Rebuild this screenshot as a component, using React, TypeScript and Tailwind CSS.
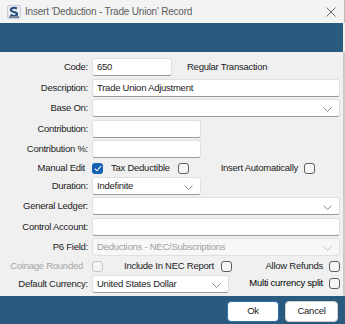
import React from "react"

const font = { fontFamily: '"Liberation Sans", Arial, sans-serif' }

function Chevron({ light }: { light?: boolean }) {
  return (
    <svg width="9" height="5" viewBox="0 0 9 5" className="absolute right-[7px] top-[7px]">
      <path d="M0.5 0.5 L4.5 4.5 L8.5 0.5" fill="none" stroke={light ? "#c4c4c4" : "#8a8a8a"} strokeWidth="1" />
    </svg>
  )
}

function Field({
  width,
  value,
  select,
  disabled,
}: {
  width?: string
  value?: string
  select?: boolean
  disabled?: boolean
}) {
  return (
    <div
      className={`relative h-[18px] ${width ?? "flex-1"} rounded-[3px] border border-[#e0e0e0] border-b-[#9a9a9a] pl-[4px] leading-[16px] whitespace-nowrap ${
        disabled ? "bg-[#f7f7f7] text-[#a0a0a0] border-b-[#e0e0e0]" : "bg-white text-[#1b1b1b]"
      }`}
    >
      {value}
      {select && <Chevron light={disabled} />}
    </div>
  )
}

function Check({ checked, disabled }: { checked?: boolean; disabled?: boolean }) {
  if (checked) {
    return (
      <div className="w-[11px] h-[11px] rounded-[3px] bg-[#1560b0] flex items-center justify-center shrink-0">
        <svg width="8" height="7" viewBox="0 0 8 7">
          <path d="M0.8 3.6 L3 5.8 L7.2 1" fill="none" stroke="white" strokeWidth="1.1" />
        </svg>
      </div>
    )
  }
  return (
    <div
      className={`w-[11px] h-[11px] rounded-[3px] border shrink-0 ${
        disabled ? "border-[#c6c6c6] bg-[#f4f4f4]" : "border-[#5e5e5e] bg-[#f6f6f6]"
      }`}
    />
  )
}

function Row({ label, children }: { label: string; children: React.ReactNode }) {
  return (
    <div className="flex items-start h-[20.5px]">
      <div className="w-[88px] text-right h-[18px] leading-[18px] text-[#1b1b1b] whitespace-nowrap">{label}</div>
      <div className="ml-[4px] flex-1 flex items-start">{children}</div>
    </div>
  )
}

export default function App() {
  return (
    <div
      className="w-[345px] h-[324px] bg-[#f0f0f0] flex flex-col text-[9.5px] tracking-[-0.25px] overflow-hidden"
      style={font}
    >
      {/* title bar */}
      <div className="h-[23px] bg-[#f3f3f3] flex items-center shrink-0 border-r border-[#b9b9b9]">
        <svg width="16" height="16" viewBox="0 0 16 16" className="ml-[6px]">
          <rect x="1" y="1" width="14" height="14" rx="2" fill="#c9ced6" />
          <rect x="2" y="2" width="12" height="12" rx="1.5" fill="#e8ebef" />
          <path d="M11 4.5 C8 3 4.5 4 5 6.5 C5.5 8.5 11 7.5 11 10 C11 12.5 6.5 12.5 4.5 11" fill="none" stroke="#234e7c" strokeWidth="2.2" />
          <rect x="3" y="12" width="10" height="2" fill="#7b8a9c" />
        </svg>
        <span className="ml-[3px] text-[10px] tracking-[-0.2px] text-[#5c5c5c] whitespace-nowrap">
          Insert 'Deduction - Trade Union' Record
        </span>
        <svg width="10" height="10" viewBox="0 0 10 10" className="ml-auto mr-[8px]">
          <path d="M0.5 0.5 L9.5 9.5 M9.5 0.5 L0.5 9.5" stroke="#6a6a6a" strokeWidth="1" />
        </svg>
      </div>

      {/* blue header band */}
      <div className="h-[29px] bg-[#2a5a7d] shrink-0 mr-[2px]" />

      {/* form */}
      <div className="flex flex-col pt-[6px] pr-[3px] border-r-[2px] border-[#c9c9c9] flex-1">
        <Row label="Code:">
          <Field width="w-[80px]" value="650" />
          <span className="ml-[15px] leading-[18px] text-[#1b1b1b] whitespace-nowrap">Regular Transaction</span>
        </Row>
        <Row label="Description:">
          <Field value="Trade Union Adjustment" />
        </Row>
        <Row label="Base On:">
          <Field select />
        </Row>
        <Row label="Contribution:">
          <Field width="w-[109px]" />
        </Row>
        <Row label="Contribution %:">
          <Field width="w-[109px]" />
        </Row>

        <div className="flex items-center h-[16px] text-[#1b1b1b] whitespace-nowrap">
          <div className="w-[88px] text-right pr-[3px]">Manual Edit</div>
          <div className="ml-[4px]">
            <Check checked />
          </div>
          <span className="ml-[8px] mr-[8px]">Tax Deductible</span>
          <Check />
          <div className="flex-1 flex items-center justify-end gap-[6px] pr-[25px]">
            <span>Insert Automatically</span>
            <Check />
          </div>
        </div>

        <Row label="Duration:">
          <Field width="w-[109px]" value="Indefinite" select />
        </Row>
        <Row label="General Ledger:">
          <Field select />
        </Row>
        <Row label="Control Account:">
          <Field />
        </Row>
        <Row label="P6 Field:">
          <Field value="Deductions - NEC/Subscriptions" select disabled />
        </Row>

        <div className="flex items-center h-[16px] text-[#1b1b1b] whitespace-nowrap">
          <div className="w-[88px] text-right pr-[5px] text-[#a6a6a6]">Coinage Rounded</div>
          <div className="ml-[4px]">
            <Check disabled />
          </div>
          <span className="ml-[21px] mr-[7px]">Include In NEC Report</span>
          <Check />
          <div className="flex-1 flex items-center justify-end gap-[6px]">
            <span>Allow Refunds</span>
            <Check />
          </div>
        </div>

        <Row label="Default Currency:">
          <Field width="w-[137px]" value="United States Dollar" select />
          <div className="flex-1 flex items-center justify-end gap-[6px] h-[18px] whitespace-nowrap">
            <span>Multi currency split</span>
            <Check />
          </div>
        </Row>
      </div>

      {/* bottom bar */}
      <div className="h-[28px] bg-[#2a5a7d] shrink-0 flex items-start justify-end pt-[5px] pr-[7px] gap-[6px]">
        <button className="w-[52px] h-[21px] bg-white rounded-[4px] border border-[#2f6fb3] text-[#1b1b1b] text-[9.5px]">
          Ok
        </button>
        <button className="w-[53px] h-[21px] bg-white rounded-[4px] border border-[#d0d0d0] text-[#1b1b1b] text-[9.5px]">
          Cancel
        </button>
      </div>
    </div>
  )
}
